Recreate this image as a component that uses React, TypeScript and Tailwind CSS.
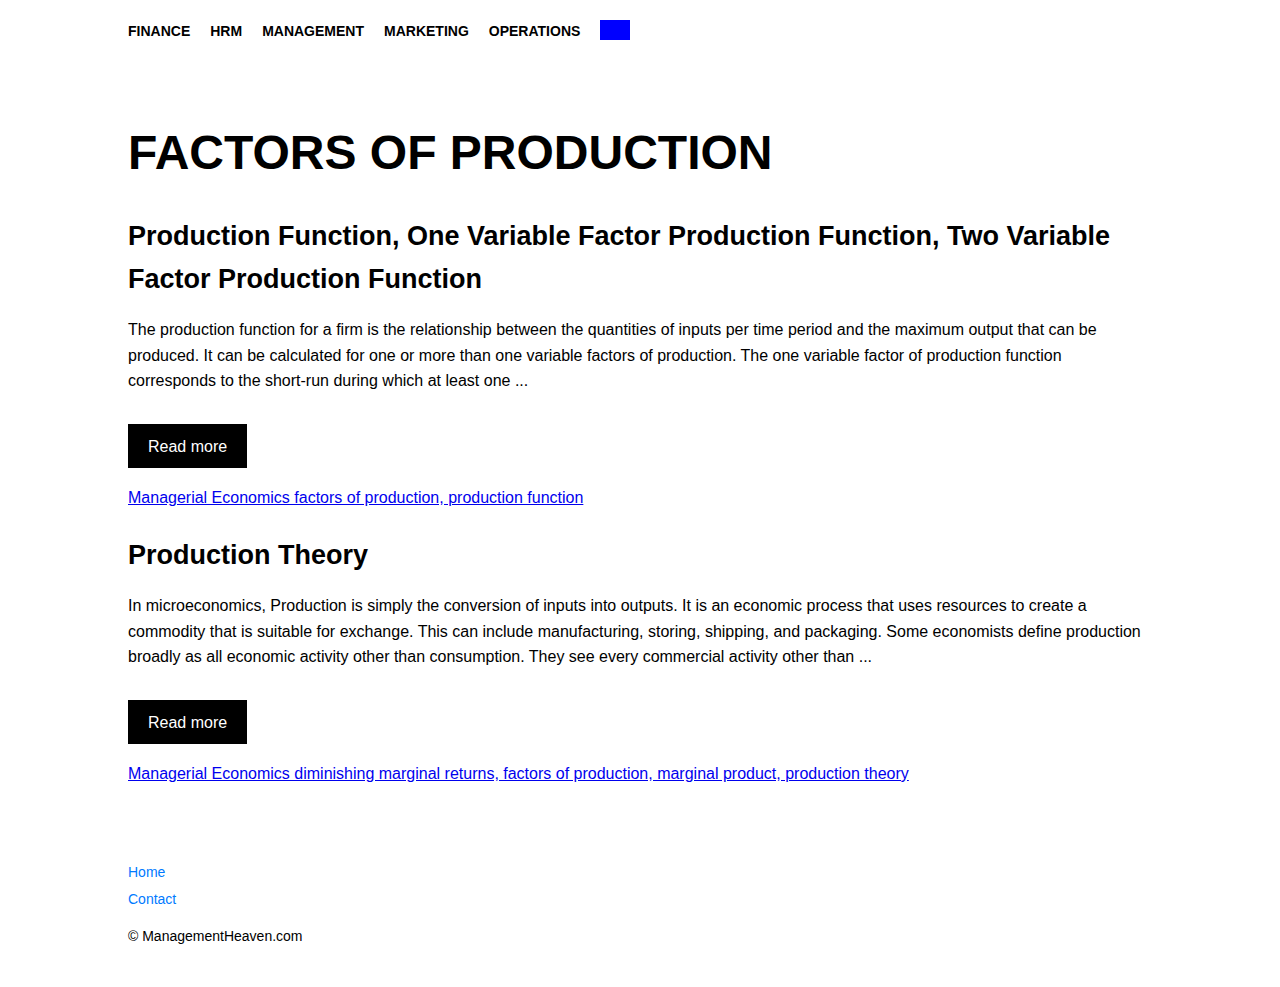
import React from "react";

const posts = [
  {
    title:
      "Production Function, One Variable Factor Production Function, Two Variable Factor Production Function",
    body:
      "The production function for a firm is the relationship between the quantities of inputs per time period and the maximum output that can be produced. It can be calculated for one or more than one variable factors of production. The one variable factor of production function corresponds to the short-run during which at least one ...",
    tags: "Managerial Economics factors of production, production function",
  },
  {
    title: "Production Theory",
    body:
      "In microeconomics, Production is simply the conversion of inputs into outputs. It is an economic process that uses resources to create a commodity that is suitable for exchange. This can include manufacturing, storing, shipping, and packaging. Some economists define production broadly as all economic activity other than consumption. They see every commercial activity other than ...",
    tags:
      "Managerial Economics diminishing marginal returns, factors of production, marginal product, production theory",
  },
];

export default function App() {
  return (
    <div
      className="min-h-[987px] bg-white text-black"
      style={{ fontFamily: '"Liberation Sans", Arial, sans-serif' }}
    >
      <div className="mx-auto w-[1024px]">
        <nav className="flex h-10 items-start gap-5 pt-5">
          {["FINANCE", "HRM", "MANAGEMENT", "MARKETING", "OPERATIONS"].map((n) => (
            <a key={n} className="text-[14px] font-bold leading-[22px] text-black">
              {n}
            </a>
          ))}
          <span className="block h-5 w-[30px] bg-[#0000ff]" />
        </nav>

        <main className="pt-[84px]">
          <h1 className="text-[48px] font-bold leading-[57.6px]">FACTORS OF PRODUCTION</h1>
          <div className="mt-[33px]">
            {posts.map((p, i) => (
              <article key={i} className={i > 0 ? "mt-[24px]" : ""}>
                <h2 className="text-[27px] font-bold leading-[43px]">{p.title}</h2>
                <p
                  className={
                    i > 0
                      ? "mt-[15.5px] text-[16px] leading-[25.6px]"
                      : "mt-[16.5px] text-[16px] leading-[25.6px]"
                  }
                >
                  {p.body}
                </p>
                <a className="mt-[30px] inline-block bg-black px-5 pt-[13px] pb-[11px] text-[16px] leading-5 text-white">
                  Read more
                </a>
                <div className="mt-[17px] text-[16px] leading-[25.6px]">
                  <a className="text-[#0000ee] underline">{p.tags}</a>
                </div>
              </article>
            ))}
          </div>
        </main>

        <footer className="pt-[76px] pb-10 text-[14px] leading-5">
          <div>
            <a className="text-[#007aff]">Home</a>
          </div>
          <div className="mt-[7px]">
            <a className="text-[#007aff]">Contact</a>
          </div>
          <p className="mt-[17px]">© ManagementHeaven.com</p>
        </footer>
      </div>
    </div>
  );
}
